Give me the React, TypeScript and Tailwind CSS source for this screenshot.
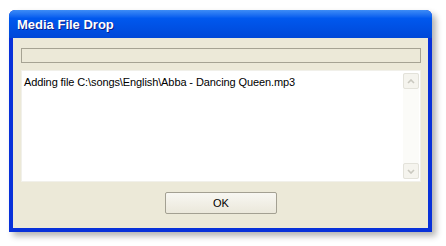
import React from 'react';

const font = { fontFamily: '"Liberation Sans", Arial, sans-serif' };

function ScrollArrow({ up }: { up?: boolean }) {
  return (
    <div className="w-[16px] h-[16px] border border-[#e3e2da] rounded-[2px] bg-[#f5f4ee] flex items-center justify-center">
      <svg width="8" height="5" viewBox="0 0 8 5">
        <path
          d={up ? 'M1 4 L4 1 L7 4' : 'M1 1 L4 4 L7 1'}
          fill="none"
          stroke="#c9c8bf"
          strokeWidth="1.6"
        />
      </svg>
    </div>
  );
}

export default function App() {
  return (
    <div className="w-[446px] h-[246px] bg-white pt-[10px] pl-[9px]" style={font}>
      <div className="w-[423px] h-[222px] flex flex-col rounded-t-[6px] bg-[#0831d9] shadow-[4px_4px_6px_rgba(0,0,0,0.3)]">
        {/* title bar */}
        <div className="h-[28px] flex items-center pl-[8px] rounded-t-[6px] bg-gradient-to-b from-[#3d8cf6] via-[#0058ee] via-30% to-[#0048d8]">
          <span className="text-white font-bold text-[13px] leading-none [text-shadow:1px_1px_0_#0a1e8c]">
            Media File Drop
          </span>
        </div>
        {/* body */}
        <div className="flex-1 mx-[4px] mb-[4px] bg-[#ece9d8] flex flex-col pt-[10px] pl-[8px] pr-[7px]">
          <div className="h-[15px] w-[400px] border border-[#a6a393] bg-[#ece9d8]" />
          <div className="mt-[7px] h-[112px] w-[400px] bg-white border border-[#f1f0ea] flex">
            <div className="flex-1 pl-[2px] pt-[5px] text-[11px] leading-[13px] tracking-[-0.1px] text-black">
              Adding file C:\songs\English\Abba - Dancing Queen.mp3
            </div>
            <div className="w-[16px] mr-[1px] my-[2px] flex flex-col justify-between bg-[#fbfbf8]">
              <ScrollArrow up />
              <ScrollArrow />
            </div>
          </div>
          <div className="mt-[10px] flex justify-center">
            <div className="w-[112px] h-[22px] border border-[#a3a092] rounded-[2px] bg-gradient-to-b from-[#f8f7f2] to-[#ebe8db] flex items-center justify-center text-[11px] text-black">
              OK
            </div>
          </div>
        </div>
      </div>
    </div>
  );
}
